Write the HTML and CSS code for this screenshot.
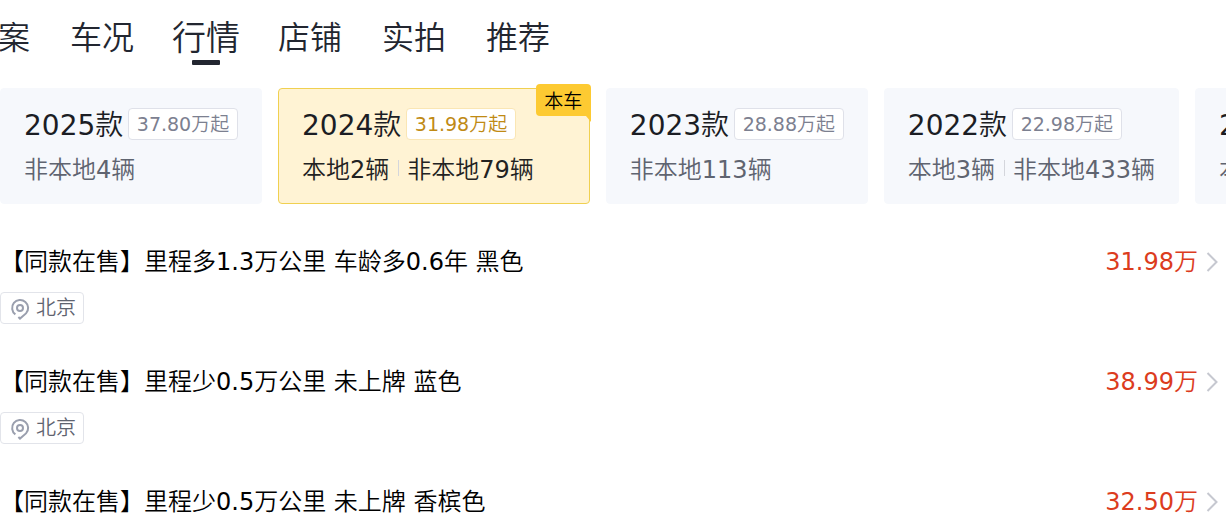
FILE: index.html
```html
<!DOCTYPE html>
<html lang="zh-CN">
<head>
    <meta charset="UTF-8">
    <meta name="viewport" content="width=device-width, initial-scale=1.0">
    <title>行情</title>
    <link rel="stylesheet" href="styles.css">
</head>
<body>
    <svg class="sprite" aria-hidden="true">
        <symbol id="pin" viewBox="0 0 20 24">
            <path d="M5.4 18.4A8 8 0 1 1 16 17.4L10 22.6L8.4 21" />
            <circle cx="10" cy="12" r="3" />
        </symbol>
        <symbol id="arrow" viewBox="0 0 12 20">
            <path d="M1.5 1L10.5 10L1.5 19" />
        </symbol>
    </svg>

    <nav class="tabs">
        <a class="tab" href="#archive">档案</a>
        <a class="tab" href="#condition">车况</a>
        <a class="tab active" href="#market">行情</a>
        <a class="tab" href="#shop">店铺</a>
        <a class="tab" href="#photos">实拍</a>
        <a class="tab" href="#recommend">推荐</a>
    </nav>

    <div class="years">
        <button class="year">
            <span class="year-top"><span class="year-name">2025款</span><span class="year-price">37.80万起</span></span>
            <span class="year-count"><span>非本地4辆</span></span>
        </button>
        <button class="year active">
            <span class="year-top"><span class="year-name">2024款</span><span class="year-price">31.98万起</span></span>
            <span class="year-count"><span>本地2辆</span><span>非本地79辆</span></span>
            <span class="badge">本车</span>
        </button>
        <button class="year">
            <span class="year-top"><span class="year-name">2023款</span><span class="year-price">28.88万起</span></span>
            <span class="year-count"><span>非本地113辆</span></span>
        </button>
        <button class="year">
            <span class="year-top"><span class="year-name">2022款</span><span class="year-price">22.98万起</span></span>
            <span class="year-count"><span>本地3辆</span><span>非本地433辆</span></span>
        </button>
        <button class="year">
            <span class="year-top"><span class="year-name">2021款</span></span>
            <span class="year-count"><span>本地</span></span>
        </button>
    </div>

    <div class="cars">
        <a class="car" href="#car1">
            <span class="car-line">
                <span class="car-title">【同款在售】里程多1.3万公里 车龄多0.6年 黑色</span>
                <span class="car-price">31.98万</span>
                <svg class="arrow"><use href="#arrow" /></svg>
            </span>
            <span class="city"><svg class="pin"><use href="#pin" /></svg>北京</span>
        </a>
        <a class="car" href="#car2">
            <span class="car-line">
                <span class="car-title">【同款在售】里程少0.5万公里 未上牌 蓝色</span>
                <span class="car-price">38.99万</span>
                <svg class="arrow"><use href="#arrow" /></svg>
            </span>
            <span class="city"><svg class="pin"><use href="#pin" /></svg>北京</span>
        </a>
        <a class="car" href="#car3">
            <span class="car-line">
                <span class="car-title">【同款在售】里程少0.5万公里 未上牌 香槟色</span>
                <span class="car-price">32.50万</span>
                <svg class="arrow"><use href="#arrow" /></svg>
            </span>
        </a>
    </div>
</body>
</html>
```
FILE: styles.css
```css
body {
    margin: 0;
    font-family: "DejaVu Sans", "Noto Sans CJK SC DemiLight", "Noto Sans CJK SC", sans-serif;
    background-color: #ffffff;
    color: #000000;
}

a {
    color: inherit;
    text-decoration: none;
}

.sprite {
    display: none;
}

/* tabs, scrolled a little to the left */
.tabs {
    display: flex;
    height: 76px;
    margin-left: -54px;
}

.tab {
    position: relative;
    display: flex;
    flex: none;
    justify-content: center;
    width: 104px;
    font-size: 32px;
    line-height: 76px;
    color: #222630;
}

.tab.active {
    font-size: 34px;
}

.tab.active::after {
    content: "";
    position: absolute;
    bottom: 11px;
    left: 38px;
    width: 28px;
    height: 5px;
    border-radius: 1px;
    background-color: #222630;
}

/* model years */
.years {
    display: flex;
    gap: 16px;
    padding-top: 12px;
    overflow: hidden;
}

.year {
    position: relative;
    display: flex;
    flex: none;
    flex-direction: column;
    gap: 12px;
    box-sizing: border-box;
    height: 116px;
    padding: 19px 23px;
    border: 1px solid #f6f8fc;
    border-radius: 4px;
    background-color: #f6f8fc;
    font: inherit;
    color: #5f6470;
    white-space: nowrap;
    cursor: pointer;
}

.year.active {
    padding-right: 55px;
    border-color: #f0d050;
    background-color: #fff3d4;
    color: #222222;
}

.year-top {
    display: flex;
    gap: 4px;
    height: 32px;
}

.year-name {
    min-width: 100px;
    font-size: 28px;
    line-height: 36px;
    text-align: left;
    color: #1b1d24;
}

.year-price {
    box-sizing: border-box;
    min-width: 110px;
    height: 32px;
    padding: 0 7px;
    border: 1px solid #dfe1e9;
    border-radius: 4px;
    background-color: #ffffff;
    font-size: 19px;
    line-height: 30px;
    color: #7c8090;
}

.year.active .year-price {
    border-color: #fae6b4;
    color: #c08a14;
}

.year-count {
    display: flex;
    align-items: center;
    font-size: 24px;
    line-height: 36px;
}

.year-count span + span::before {
    content: "";
    display: inline-block;
    width: 1px;
    height: 16px;
    margin: 0 8px 0 9px;
    vertical-align: 2px;
    background-color: #d4d6dc;
}

.badge {
    position: absolute;
    top: -5px;
    right: -2px;
    width: 55px;
    height: 32px;
    border-radius: 4px 4px 0 4px;
    background-color: #fdca32;
    font-size: 19px;
    line-height: 34px;
    text-align: center;
    color: #000000;
}

.badge::after {
    content: "";
    position: absolute;
    top: 32px;
    right: 0;
    border-top: 6px solid #fdca32;
    border-left: 5px solid transparent;
}

/* cars on sale */
.cars {
    padding-top: 40px;
}

.car {
    display: block;
    height: 120px;
}

.car-line {
    display: flex;
    align-items: center;
    height: 36px;
    margin-bottom: 12px;
    padding-right: 8px;
    font-size: 24px;
    line-height: 36px;
    white-space: nowrap;
}

.car-title {
    flex: 1;
    overflow: hidden;
}

.car-price {
    color: #dc3c1e;
}

.arrow {
    width: 12px;
    height: 20px;
    margin-left: 8px;
    fill: none;
    stroke: #c6c8d0;
    stroke-width: 2;
}

.city {
    display: inline-flex;
    align-items: center;
    box-sizing: border-box;
    height: 32px;
    padding: 0 7px 0 9px;
    border: 1px solid #e2e4ea;
    border-radius: 4px;
    font-size: 20px;
    line-height: 30px;
    color: #5f6470;
}

.pin {
    width: 20px;
    height: 24px;
    margin-right: 6px;
    fill: none;
    stroke: #9a9fae;
    stroke-width: 2;
}
```
